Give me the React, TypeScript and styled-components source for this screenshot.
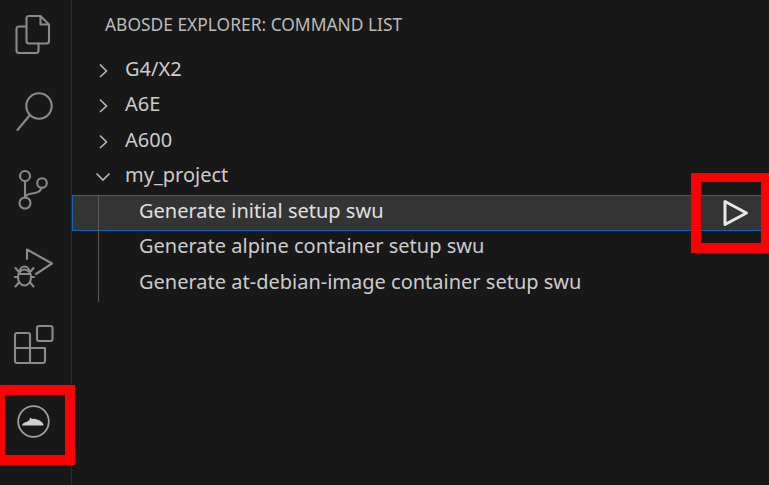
import React from "react";
import styled, { createGlobalStyle } from "styled-components";

const Global = createGlobalStyle`
  html, body { margin: 0; padding: 0; background: #181818; }
  #root { width: 769px; height: 485px; overflow: hidden; }
`;

const Page = styled.div`
  position: relative;
  display: flex;
  width: 769px;
  height: 485px;
  background: #181818;
  font-family: "Noto Sans", "Open Sans", sans-serif;
  overflow: hidden;
`;

const ActivityBar = styled.nav`
  flex: 0 0 71px;
  width: 71px;
  border-right: 1px solid #2b2b2b;
  display: flex;
  flex-direction: column;
  box-sizing: content-box;
`;

const Icon = styled.svg`
  display: block;
  width: 71px;
  height: 78px;
  fill: none;
  stroke: #8a8a8a;
  stroke-width: 2.1;
  stroke-linejoin: round;
  stroke-linecap: round;
`;

const Sidebar = styled.main`
  flex: 1;
  min-width: 0;
`;

const Header = styled.header`
  height: 53px;
  box-sizing: border-box;
  padding: 13px 0 0 33px;
  font-size: 17.4px;
  line-height: 22px;
  color: #bbbbbb;
  white-space: nowrap;
`;

const Row = styled.div`
  height: 35.5px;
  display: flex;
  align-items: center;
  box-sizing: border-box;
  padding: 0 0 5px 21px;
  font-size: 20px;
  color: #cccccc;
  white-space: nowrap;
`;

const Chevron = styled.svg`
  flex: 0 0 22px;
  width: 22px;
  height: 22px;
  margin: 3px 10px 0 0;
  fill: none;
  stroke: #b8b8b8;
  stroke-width: 1.6;
`;

const OpenChevron = styled(Chevron)`
  margin-left: -1px;
  margin-right: 11px;
`;

const Group = styled.div`
  position: relative;
`;

const Guide = styled.div`
  position: absolute;
  left: 26px;
  top: 0;
  bottom: 0;
  width: 1px;
  background: #585858;
`;

const Command = styled.div<{ $selected?: boolean }>`
  height: 35.5px;
  display: flex;
  align-items: center;
  justify-content: space-between;
  box-sizing: border-box;
  padding: 0 19px 5px 66px;
  font-size: 20px;
  white-space: nowrap;
  color: ${(p) => (p.$selected ? "#e0e0e0" : "#cccccc")};
  background: ${(p) => (p.$selected ? "#343434" : "transparent")};
  border: 1px solid ${(p) => (p.$selected ? "#0a66b8" : "transparent")};
  border-width: 1px 0 1px 1px;
`;

const PlayIcon = styled.svg`
  width: 30px;
  height: 30px;
  margin-bottom: -5px;
  fill: none;
  stroke: #e8e8e8;
  stroke-width: 3;
  stroke-linejoin: round;
`;

const Highlight = styled.div`
  position: absolute;
  box-sizing: border-box;
  border-style: solid;
  border-color: #ff0000;
`;

const LeftHighlight = styled(Highlight)`
  left: 0;
  top: 385px;
  width: 75px;
  height: 80px;
  border-width: 10px 10px 10px 5px;
`;

const RightHighlight = styled(Highlight)`
  left: 691px;
  top: 173px;
  width: 78px;
  height: 80px;
  border-width: 9px 8px 10px 10px;
`;

const ChevronRight = () => (
  <Chevron viewBox="0 0 22 22">
    <path d="M7 5.500l6.500 6.500L7 18" />
  </Chevron>
);

const ChevronDown = () => (
  <OpenChevron viewBox="0 0 22 22">
    <path d="M4.500 8.500l6.500 6.500 6.500-6.500" />
  </OpenChevron>
);

export default function App() {
  return (
    <Page>
      <Global />
      <ActivityBar>
        <Icon viewBox="0 0 71 78">
          <path d="M29 16h11.500l8.500 8.500V41a2.500 2.500 0 0 1-2.500 2.500H29a2.500 2.500 0 0 1-2.500-2.500V18.500A2.500 2.500 0 0 1 29 16z" />
          <path d="M40.500 16.500v8h8" />
          <path d="M26 26.500h-7a2.500 2.500 0 0 0-2.500 2.500v21.500a2.500 2.500 0 0 0 2.500 2.500h17a2.500 2.500 0 0 0 2.500-2.500v-7" />
        </Icon>
        <Icon viewBox="0 78 71 78">
          <circle cx="39" cy="106" r="12.700" />
          <path d="M29.500 115.500L17.500 130" />
        </Icon>
        <Icon viewBox="0 156 71 78">
          <circle cx="25" cy="176" r="5" />
          <circle cx="25" cy="203" r="5.500" />
          <circle cx="42" cy="183" r="4.800" />
          <path d="M25 181v16.500" />
          <path d="M41.500 188c-1 3.500-4.500 5-9.500 5.500-3.500.3-6 1.500-7 4" />
        </Icon>
        <Icon viewBox="0 234 71 78">
          <path d="M27 259v-9.500l25 14-16 10.500" />
          <ellipse cx="24.500" cy="277.500" rx="6.500" ry="8" />
          <path d="M20 271a4.500 4.500 0 0 1 9 0M18.500 274h12M18 277h-3M31 277h3M18.500 283l-3 3.500M30.500 283l3 3.500M18.500 271.500l-3-3.500M30.500 271.500l3-3.500" />
        </Icon>
        <Icon viewBox="0 312 71 78">
          <rect x="37" y="326" width="15.500" height="15" rx="2" />
          <path d="M17 333h11a2 2 0 0 1 2 2v28H17a2 2 0 0 1-2-2v-26a2 2 0 0 1 2-2zM15 348h30M30 363h13a2 2 0 0 0 2-2v-13" />
        </Icon>
        <svg width="71" height="78" viewBox="0 390 71 78" style={{ display: "block" }}>
          <circle cx="33.500" cy="421.500" r="15.300" fill="none" stroke="#a0a0a0" strokeWidth="1.800" />
          <path d="M22 425c1-2.500 5-3 7-4.500l1.500-3 1.500 1.500c1.500-.5 3.500-.5 5 .5 3 1 5.500 2.500 6.500 5 .3 .8-.5 1-1.500 1H23c-.8 0-1.200-.2-1-.5z" fill="#cfcfcf" />
        </svg>
      </ActivityBar>
      <Sidebar>
        <Header>ABOSDE EXPLORER: COMMAND LIST</Header>
        <Row><ChevronRight />G4/X2</Row>
        <Row><ChevronRight />A6E</Row>
        <Row><ChevronRight />A600</Row>
        <Row><ChevronDown />my_project</Row>
        <Group>
          <Command $selected>
            Generate initial setup swu
            <PlayIcon viewBox="0 0 30 30">
              <path d="M5 3.500L26.500 15 5 26.500z" />
            </PlayIcon>
          </Command>
          <Command>Generate alpine container setup swu</Command>
          <Command>Generate at-debian-image container setup swu</Command>
          <Guide />
        </Group>
      </Sidebar>
      <LeftHighlight />
      <RightHighlight />
    </Page>
  );
}
